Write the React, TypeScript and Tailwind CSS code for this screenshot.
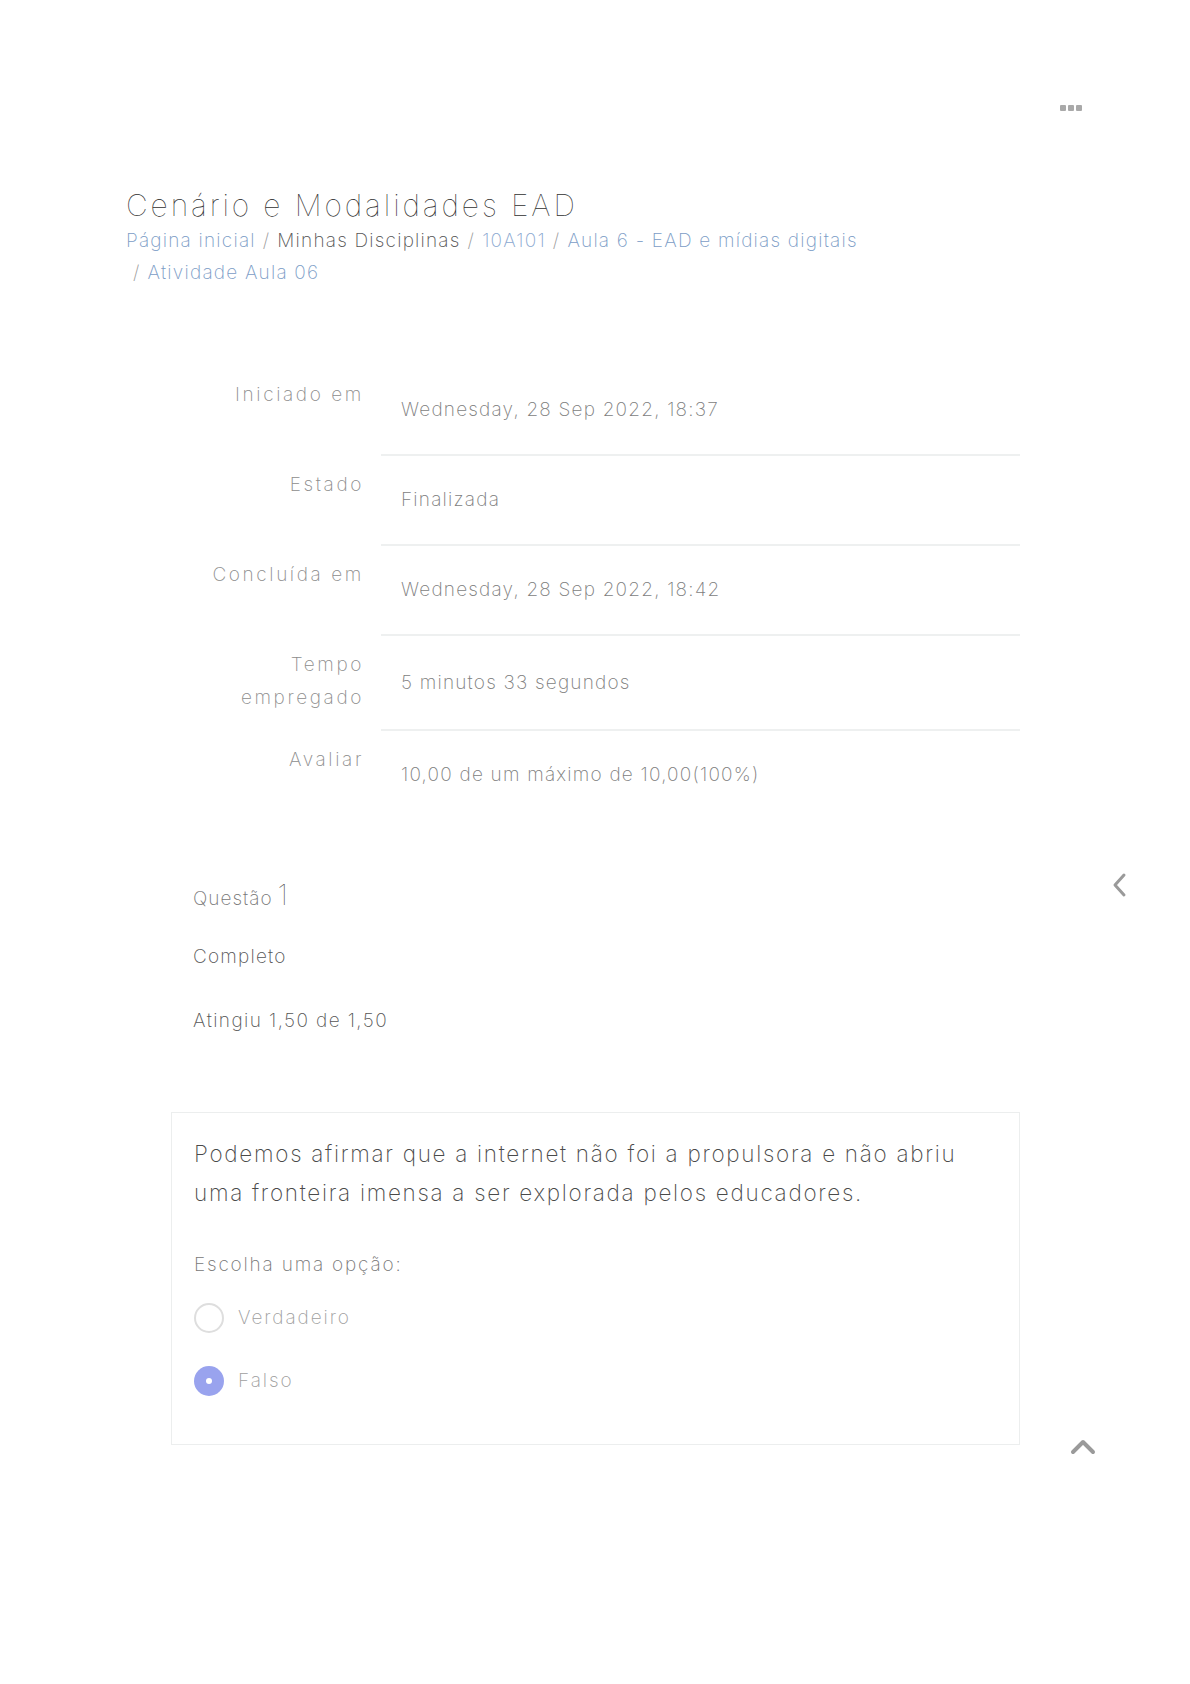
import React from "react";

const rows: { label: string[]; value: string }[] = [
  { label: ["Iniciado em"], value: "Wednesday, 28 Sep 2022, 18:37" },
  { label: ["Estado"], value: "Finalizada" },
  { label: ["Concluída em"], value: "Wednesday, 28 Sep 2022, 18:42" },
  { label: ["Tempo", "empregado"], value: "5 minutos 33 segundos" },
  { label: ["Avaliar"], value: "10,00 de um máximo de 10,00(100%)" },
];

export default function App() {
  return (
    <div className="relative w-[1190px] min-h-[1684px] bg-white font-['Inter',sans-serif] font-extralight">
      {/* top bar */}
      <div className="flex h-[187px] justify-end pr-[108px] pt-[105px]">
        <div className="flex h-[6px] gap-[2px]">
          <span className="block h-[6px] w-[6px] rounded-[1px] bg-[#a9a9a9]" />
          <span className="block h-[6px] w-[6px] rounded-[1px] bg-[#a9a9a9]" />
          <span className="block h-[6px] w-[6px] rounded-[1px] bg-[#a9a9a9]" />
        </div>
      </div>

      {/* title + breadcrumb */}
      <div className="pl-[126px]">
        <h1 className="text-[30px] leading-[36px] font-thin tracking-[2.9px] text-[#2f2f2f]">
          Cenário e Modalidades EAD
        </h1>
        <div className="mt-[2px] text-[19px] leading-[32px] font-extralight tracking-[1.2px]">
          <div>
            <span className="text-[#7b9cc6]">Página inicial</span>
            <span className="mx-[7px] text-[#999]">/</span>
            <span className="text-[#555]">Minhas Disciplinas</span>
            <span className="mx-[7px] text-[#999]">/</span>
            <span className="text-[#8aa8d0]">10A101</span>
            <span className="mx-[7px] text-[#999]">/</span>
            <span className="text-[#7b9cc6]">Aula 6 - EAD e mídias digitais</span>
          </div>
          <div className="pl-[7px]">
            <span className="mr-[7px] text-[#999]">/</span>
            <span className="text-[#7b9cc6]">Atividade Aula 06</span>
          </div>
        </div>
      </div>

      {/* summary table */}
      <div className="mt-[75px] pl-[126px]">
        {rows.map((r, i) => (
          <div key={i} className="flex items-stretch">
            <div className="w-[238px] pt-[14px] pb-[15px] text-right text-[19px] leading-[33px] font-extralight tracking-[2.6px] text-[#8d8d8d]">
              {r.label.map((l, j) => (
                <div key={j}>{l}</div>
              ))}
            </div>
            <div
              className={
                "ml-[17px] flex w-[639px] items-center pl-[20px] pt-[30px] pb-[30px] text-[19px] leading-[28px] font-extralight tracking-[1.2px] text-[#7d7d7d] " +
                (i > 0 ? "border-t-2 border-[#eef0f0]" : "border-t-2 border-transparent")
              }
            >
              {r.value}
            </div>
          </div>
        ))}
      </div>

      {/* question info */}
      <div className="mt-[55px] pl-[193px]">
        <div className="flex items-baseline h-[36px]">
          <span className="text-[19px] font-extralight tracking-[1px] text-[#777]">Questão</span>
          <span className="ml-[5px] text-[28px] font-thin text-[#555]">1</span>
        </div>
        <div className="mt-[33px] text-[19px] leading-[28px] font-extralight tracking-[1.2px] text-[#555]">
          Completo
        </div>
        <div className="mt-[36px] text-[19px] leading-[28px] font-extralight tracking-[1.4px] text-[#555]">
          Atingiu 1,50 de 1,50
        </div>
      </div>

      {/* question card */}
      <div className="ml-[171px] mt-[77px] w-[849px] border border-[#eceeee] px-[22px] pt-[21px] pb-[48px]">
        <p className="text-[22.5px] leading-[39px] font-extralight tracking-[1.7px] text-[#4a4a4a]">
          Podemos afirmar que a internet não foi a propulsora e não abriu
          <br />
          uma fronteira imensa a ser explorada pelos educadores.
        </p>
        <div className="mt-[38px] text-[19px] leading-[30px] font-extralight tracking-[1.8px] text-[#777]">
          Escolha uma opção:
        </div>
        <div className="mt-[23px] flex items-center gap-[14px]">
          <span className="block h-[30px] w-[30px] rounded-full border-2 border-[#dedede] bg-white" />
          <span className="text-[19px] font-extralight tracking-[1.9px] text-[#a0a0a0]">Verdadeiro</span>
        </div>
        <div className="mt-[33px] flex items-center gap-[14px]">
          <span className="flex h-[30px] w-[30px] items-center justify-center rounded-full bg-[#99a3ee]">
            <span className="block h-[6px] w-[6px] rounded-full bg-white" />
          </span>
          <span className="text-[19px] font-extralight tracking-[1.9px] text-[#a0a0a0]">Falso</span>
        </div>
      </div>

      {/* floating chevrons */}
      <svg
        className="absolute left-[1112px] top-[872px]"
        width="16"
        height="26"
        viewBox="0 0 16 26"
        fill="none"
        stroke="#9a9a9a"
        strokeWidth="3"
        strokeLinecap="round"
        strokeLinejoin="round"
      >
        <path d="M12 3 L3 13 L12 23" />
      </svg>
      <svg
        className="absolute left-[1070px] top-[1439px]"
        width="26"
        height="16"
        viewBox="0 0 26 16"
        fill="none"
        stroke="#9a9a9a"
        strokeWidth="4"
        strokeLinecap="round"
        strokeLinejoin="round"
      >
        <path d="M3 13 L13 3 L23 13" />
      </svg>
    </div>
  );
}
